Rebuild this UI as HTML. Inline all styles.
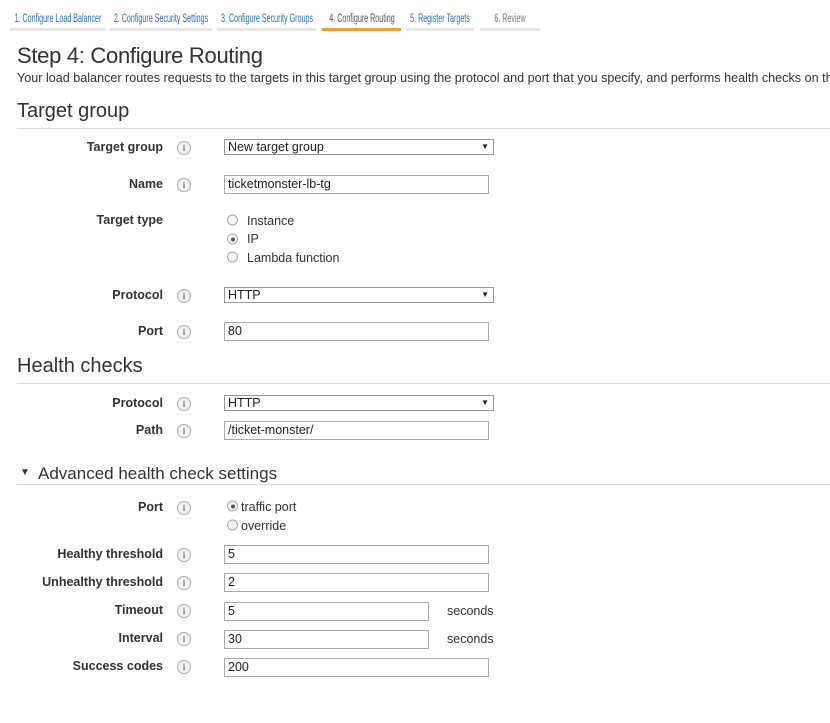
<!DOCTYPE html>
<html><head><meta charset="utf-8"><style>
body{margin:0;width:830px;height:723px;background:#fff;font-family:"Liberation Sans",Arial,sans-serif;color:#333;position:relative;overflow:hidden}
.a{position:absolute;white-space:nowrap}
.tab{position:absolute;top:11px;height:17px;border-bottom:3px solid #e6e6e6;font-size:11.5px;color:#2a6ebb;line-height:15px;white-space:nowrap}
.tab span{position:absolute;left:50%;top:1px;transform:translateX(-50%) scaleX(0.62)}
.tab.on{border-bottom-color:#f0a030;color:#555}
.lbl{position:absolute;right:667px;font-size:12.5px;font-weight:bold;color:#333;white-space:nowrap;transform:translateY(-50%)}
.info{position:absolute;left:177px;width:12px;height:12px;border:1px solid #aaa;border-radius:50%;background:#f2f2f2;transform:translateY(-50%);font-size:9px;line-height:12px;text-align:center;color:#777;font-weight:bold;font-family:"Liberation Serif",serif}
.inp{position:absolute;left:224px;border:1px solid #aaa;box-sizing:border-box;height:19px;font-size:12.5px;line-height:17px;padding-left:3px;color:#222}
.sel{position:absolute;left:224px;width:270px;height:16px;box-sizing:border-box;border:1px solid #999;font-size:12.5px;line-height:14px;padding-left:3px;color:#222}
.sel:after{content:"▼";position:absolute;right:4px;top:0;font-size:8px}
.rad{position:absolute;width:9px;height:9px;border:1px solid #aaa;border-radius:50%;background:#f4f4f4;transform:translateY(-50%)}
.rad.on:after{content:"";position:absolute;left:2.5px;top:2.5px;width:4px;height:4px;border-radius:50%;background:#555}
.t{position:absolute;font-size:12.5px;color:#333;transform:translateY(-50%);white-space:nowrap}
.line{position:absolute;left:17px;right:0;height:1px;background:#ddd}
</style></head><body>
<div class="tab" style="left:10px;width:95px"><span>1. Configure Load Balancer</span></div>
<div class="tab" style="left:110px;width:102px"><span>2. Configure Security Settings</span></div>
<div class="tab" style="left:217px;width:99px"><span>3. Configure Security Groups</span></div>
<div class="tab on" style="left:322px;width:79px"><span>4. Configure Routing</span></div>
<div class="tab" style="left:406px;width:68px"><span>5. Register Targets</span></div>
<div class="tab" style="left:480px;width:60px;color:#777"><span>6. Review</span></div>

<div class="a" style="left:17px;top:43px;font-size:22px;color:#333;letter-spacing:-0.3px">Step 4: Configure Routing</div>
<div class="a" style="left:17px;top:71px;font-size:12.6px;color:#333">Your load balancer routes requests to the targets in this target group using the protocol and port that you specify, and performs health checks on the</div>
<div class="a" style="left:17px;top:100px;font-size:20px">Target group</div>
<div class="line" style="top:128px"></div>

<div class="lbl" style="top:147px">Target group</div><div class="info" style="top:148px">i</div>
<div class="sel" style="top:139px">New target group</div>
<div class="lbl" style="top:184px">Name</div><div class="info" style="top:185px">i</div>
<div class="inp" style="top:175px;width:265px">ticketmonster-lb-tg</div>
<div class="lbl" style="top:220px">Target type</div>
<div class="rad" style="left:227px;top:220px"></div><div class="t" style="left:247px;top:221px">Instance</div>
<div class="rad on" style="left:227px;top:239px"></div><div class="t" style="left:247px;top:239px">IP</div>
<div class="rad" style="left:227px;top:257px"></div><div class="t" style="left:247px;top:258px">Lambda function</div>
<div class="lbl" style="top:295px">Protocol</div><div class="info" style="top:296px">i</div>
<div class="sel" style="top:287px">HTTP</div>
<div class="lbl" style="top:331px">Port</div><div class="info" style="top:332px">i</div>
<div class="inp" style="top:322px;width:265px">80</div>

<div class="a" style="left:17px;top:355px;font-size:20px">Health checks</div>
<div class="line" style="top:383px"></div>
<div class="lbl" style="top:403px">Protocol</div><div class="info" style="top:404px">i</div>
<div class="sel" style="top:395px">HTTP</div>
<div class="lbl" style="top:430px">Path</div><div class="info" style="top:431px">i</div>
<div class="inp" style="top:421px;width:265px">/ticket-monster/</div>

<div class="a" style="left:20px;top:467px;font-size:10px">▼</div>
<div class="a" style="left:38px;top:464px;font-size:17px">Advanced health check settings</div>
<div class="line" style="top:484px"></div>
<div class="lbl" style="top:507px">Port</div><div class="info" style="top:508px">i</div>
<div class="rad on" style="left:227px;top:506px"></div><div class="t" style="left:241px;top:507px">traffic port</div>
<div class="rad" style="left:227px;top:525px"></div><div class="t" style="left:241px;top:526px">override</div>
<div class="lbl" style="top:554px">Healthy threshold</div><div class="info" style="top:555px">i</div>
<div class="inp" style="top:545px;width:265px">5</div>
<div class="lbl" style="top:582px">Unhealthy threshold</div><div class="info" style="top:583px">i</div>
<div class="inp" style="top:573px;width:265px">2</div>
<div class="lbl" style="top:610px">Timeout</div><div class="info" style="top:611px">i</div>
<div class="inp" style="top:602px;width:205px">5</div><div class="t" style="left:447px;top:611px">seconds</div>
<div class="lbl" style="top:638px">Interval</div><div class="info" style="top:639px">i</div>
<div class="inp" style="top:630px;width:205px">30</div><div class="t" style="left:447px;top:639px">seconds</div>
<div class="lbl" style="top:666px">Success codes</div><div class="info" style="top:667px">i</div>
<div class="inp" style="top:658px;width:265px">200</div>
</body></html>
